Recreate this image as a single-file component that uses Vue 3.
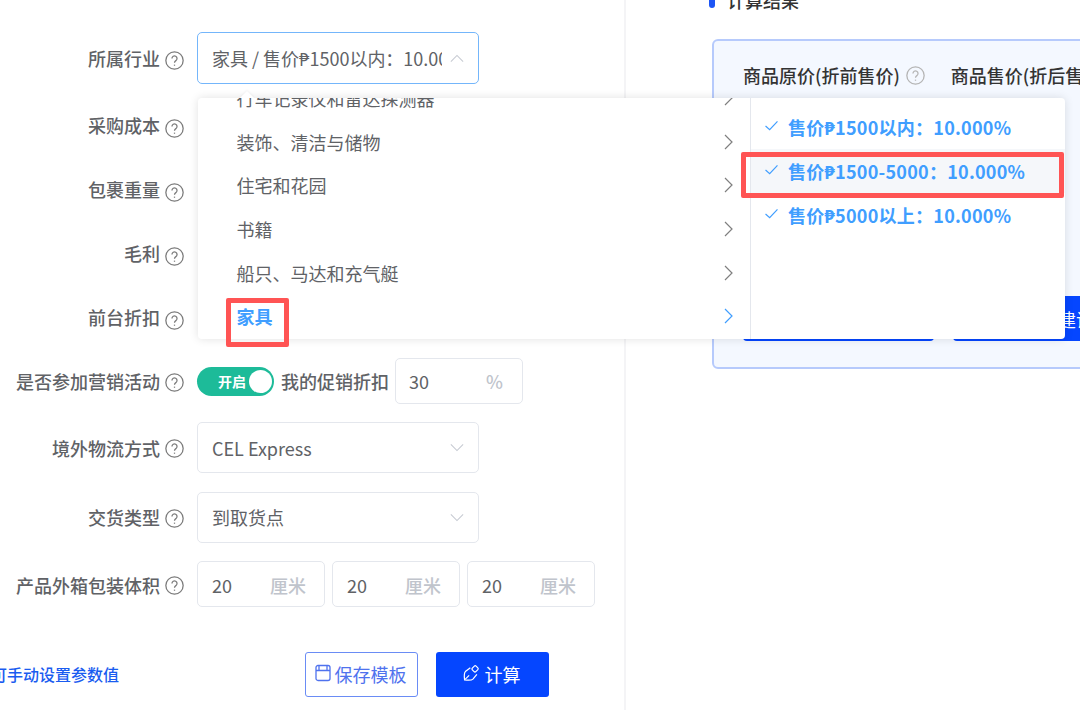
<script setup>
const rows = [
  { label: '采购成本', unit: '' },
  { label: '包裹重量', unit: '' },
  { label: '毛利', unit: '%' },
  { label: '前台折扣', unit: '%' }
]
const categories = ['行车记录仪和雷达探测器', '装饰、清洁与储物', '住宅和花园', '书籍', '船只、马达和充气艇', '家具']
const prices = ['售价₱1500以内：10.000%', '售价₱1500-5000：10.000%', '售价₱5000以上：10.000%']
</script>

<template>
  <div class="page">
    <section class="form">
      <div class="row first">
        <label class="label">所属行业</label>
        <svg class="help" viewBox="0 0 18 18"><circle cx="9" cy="9" r="8.2"/><path d="M6.6 7.1a2.4 2.4 0 1 1 3.7 2c-.9.6-1.3 1-1.3 2.1"/><path d="M9 12.9v1.1"/></svg>
        <div class="select focus">
          <span class="select-text">家具 / 售价₱1500以内：10.000%</span>
          <svg class="caret" viewBox="0 0 16 10"><path d="M1 8.5 8 1.5l7 7"/></svg>
        </div>
      </div>

      <div v-for="r in rows" :key="r.label" class="row plain">
        <label class="label">{{ r.label }}</label>
        <svg class="help" viewBox="0 0 18 18"><circle cx="9" cy="9" r="8.2"/><path d="M6.6 7.1a2.4 2.4 0 1 1 3.7 2c-.9.6-1.3 1-1.3 2.1"/><path d="M9 12.9v1.1"/></svg>
      </div>

      <div class="row promo">
        <label class="label">是否参加营销活动</label>
        <svg class="help" viewBox="0 0 18 18"><circle cx="9" cy="9" r="8.2"/><path d="M6.6 7.1a2.4 2.4 0 1 1 3.7 2c-.9.6-1.3 1-1.3 2.1"/><path d="M9 12.9v1.1"/></svg>
        <div class="switch"><span class="switch-text">开启</span><span class="knob"></span></div>
        <span class="promo-label">我的促销折扣</span>
        <div class="input"><span>30</span><span class="unit pct">%</span></div>
      </div>

      <div class="row tall shipping">
        <label class="label">境外物流方式</label>
        <svg class="help" viewBox="0 0 18 18"><circle cx="9" cy="9" r="8.2"/><path d="M6.6 7.1a2.4 2.4 0 1 1 3.7 2c-.9.6-1.3 1-1.3 2.1"/><path d="M9 12.9v1.1"/></svg>
        <div class="select">
          <span class="select-text">CEL Express</span>
          <svg class="caret" viewBox="0 0 16 10"><path d="M1 1.5l7 7 7-7"/></svg>
        </div>
      </div>

      <div class="row tall delivery">
        <label class="label">交货类型</label>
        <svg class="help" viewBox="0 0 18 18"><circle cx="9" cy="9" r="8.2"/><path d="M6.6 7.1a2.4 2.4 0 1 1 3.7 2c-.9.6-1.3 1-1.3 2.1"/><path d="M9 12.9v1.1"/></svg>
        <div class="select">
          <span class="select-text">到取货点</span>
          <svg class="caret" viewBox="0 0 16 10"><path d="M1 1.5l7 7 7-7"/></svg>
        </div>
      </div>

      <div class="row volume">
        <label class="label">产品外箱包装体积</label>
        <svg class="help" viewBox="0 0 18 18"><circle cx="9" cy="9" r="8.2"/><path d="M6.6 7.1a2.4 2.4 0 1 1 3.7 2c-.9.6-1.3 1-1.3 2.1"/><path d="M9 12.9v1.1"/></svg>
        <div class="dims">
          <div v-for="n in 3" :key="n" class="input"><span>20</span><span class="unit">厘米</span></div>
        </div>
      </div>

      <div class="actions">
        <span class="link"><span>可手动设置参数值</span></span>
        <button class="btn ghost">
          <svg class="btn-icon" viewBox="0 0 16 18"><rect x="1" y="1.5" width="14" height="15" rx="2"/><path d="M1 6.500h14M4 1.500v5M12 1.500v5"/></svg>
          保存模板
        </button>
        <button class="btn solid">
          <svg class="btn-icon nib" viewBox="0 0 18 18"><path d="M7.800 3.500 2.500 7.500c-1 1-1.300 5-.8 8.800 3.800.5 7.800.2 8.800-.8l4.200-5"/><path d="M2.200 15.800l4.300-4.300"/><rect x="10" y="2" width="5.600" height="5.200" rx="1.300" transform="rotate(-45 12.800 4.600)"/></svg>
          计算
        </button>
      </div>
    </section>

    <section class="result">
      <h3 class="result-title">计算结果</h3>
      <div class="card">
        <div class="card-head">
          <span class="col-a">商品原价(折前售价)</span>
          <svg class="help light" viewBox="0 0 18 18"><circle cx="9" cy="9" r="8.2"/><path d="M6.6 7.1a2.4 2.4 0 1 1 3.7 2c-.9.6-1.3 1-1.300 2.100"/><path d="M9 12.900v1.100"/></svg>
          <span class="col-b">商品售价(折后售价)</span>
        </div>
        <div class="card-actions">
          <div class="card-btn"></div>
          <div class="card-btn wide">建议售价</div>
        </div>
      </div>
    </section>

    <div class="popper">
      <span class="popper-arrow"></span>
      <ul class="menu cats">
        <li v-for="c in categories" :key="c" class="cat" :class="{ active: c === '家具' }">
          <span>{{ c }}</span>
          <svg class="chev" viewBox="0 0 9 16"><path d="M1 1l7 7-7 7"/></svg>
        </li>
      </ul>
      <ul class="menu prices">
        <li v-for="(p, i) in prices" :key="p" class="price" :class="{ hover: i === 1 }">
          <svg class="check" viewBox="0 0 16 12"><path d="M1.500 6.500 6 10.500 14.500 1.500"/></svg>
          <span>{{ p }}</span>
        </li>
      </ul>
    </div>

    <div class="mark mark-cat"></div>
    <div class="mark mark-price"></div>
  </div>
</template>

<style scoped>
.page {
  position: relative;
  width: 1080px;
  height: 710px;
  overflow: hidden;
  display: flex;
  background: #fff;
  font-family: "Noto Sans CJK SC", "Noto Sans", sans-serif;
  font-size: 18px;
  color: #606266;
}
.form {
  width: 626px;
  flex: none;
  box-sizing: border-box;
  padding-top: 32px;
  border-right: 2px solid #f4f4f6;
  display: flex;
  flex-direction: column;
  gap: 18px;
}
.row {
  height: 46px;
  display: flex;
  align-items: center;
}
.row.first { height: 54px; }
.row.first .label { margin-top: -2px; }
.row.plain .label { margin-top: -4px; }
.row.promo { margin-top: -2px; }
.row.tall { height: 51px; }
.row.shipping { margin-bottom: 1px; }
.row.delivery .label { margin-top: -1px; }
.row.delivery .select-text { margin-top: -2px; }
.row.volume .label { margin-top: 2px; }
.row.volume .input span { margin-top: 2px; }
.label {
  width: 160px;
  flex: none;
  text-align: right;
  font-weight: 500;
  line-height: 24px;
  white-space: nowrap;
}
.help {
  width: 19px;
  height: 19px;
  flex: none;
  margin: 2px 13px 0 5px;
  fill: none;
  stroke: #7a7a7a;
  stroke-width: 1.200;
}
.help.light { stroke: #b4b4b4; margin: 0; }
.select {
  width: 282px;
  height: 51px;
  box-sizing: border-box;
  border: 1px solid #e4e7ed;
  border-radius: 5px;
  display: flex;
  align-items: center;
  padding: 0 14px;
  gap: 8px;
}
.select.focus { border-color: #74b6fb; height: 52px; margin-top: -2px; }
.select-text {
  flex: 1;
  min-width: 0;
  overflow: hidden;
  white-space: nowrap;
}
.caret {
  width: 14px;
  height: 9px;
  flex: none;
  fill: none;
  stroke: #c6cad2;
  stroke-width: 1.200;
}
.switch {
  width: 77px;
  height: 29px;
  border-radius: 15px;
  background: #1dbb99;
  display: flex;
  align-items: center;
  justify-content: flex-end;
  padding-right: 1px;
  box-sizing: border-box;
  gap: 3px;
  flex: none;
}
.switch-text { color: #fff; font-size: 14px; font-weight: 700; }
.knob {
  width: 23px;
  height: 23px;
  border-radius: 50%;
  background: #fff;
  margin-right: 1px;
}
.promo-label {
  margin: 0 6px 0 7px;
  font-weight: 500;
  white-space: nowrap;
}
.input {
  width: 128px;
  height: 46px;
  box-sizing: border-box;
  border: 1px solid #e4e7ed;
  border-radius: 5px;
  padding: 0 18px 0 13px;
  display: flex;
  align-items: center;
  justify-content: space-between;
  flex: none;
}
.unit { color: #c0c4cc; font-weight: 500; }
.unit.pct { margin-right: 1px; }
.dims { display: flex; gap: 7px; }
.dims .input { padding: 0 18px 0 14px; }
.actions {
  margin-top: 26px;
  display: flex;
  align-items: center;
  height: 46px;
}
.link {
  width: 119px;
  flex: none;
  display: flex;
  justify-content: flex-end;
  overflow: hidden;
  white-space: nowrap;
  font-size: 16px;
  font-weight: 500;
  color: #1a5cf0;
}
.btn {
  width: 113px;
  height: 45px;
  box-sizing: border-box;
  border-radius: 3px;
  font: inherit;
  display: flex;
  align-items: center;
  justify-content: center;
  gap: 4px;
  padding: 0 2px 0 0;
  flex: none;
}
.ghost {
  margin-left: 186px;
  background: #fff;
  border: 1px solid #6a8cf5;
  color: #4f72ee;
}
.solid {
  margin-left: 18px;
  background: #0546ff;
  border: 0;
  color: #fff;
  gap: 5px;
}
.btn-icon {
  width: 16px;
  height: 18px;
  fill: none;
  stroke: currentColor;
  stroke-width: 1.300;
  margin-top: -3px;
}
.btn-icon.nib { width: 17px; height: 18px; }
.result {
  flex: 1;
  min-width: 0;
  padding-left: 83px;
}
.result-title {
  margin: -12px 0 0;
  height: 24px;
  line-height: 24px;
  font-size: 18px;
  font-weight: 500;
  color: #333;
  white-space: nowrap;
  padding-left: 18px;
  position: relative;
}
.result-title::before {
  content: "";
  position: absolute;
  left: 0;
  top: 0;
  width: 6px;
  height: 20px;
  border-radius: 3px;
  background: #1d55f5;
}
.card {
  margin-top: 27px;
  margin-left: 3px;
  width: 520px;
  height: 330px;
  box-sizing: border-box;
  background: #f4f8ff;
  border: 2px solid #b6cafc;
  border-radius: 6px;
  padding: 20px 29px 0;
  display: flex;
  flex-direction: column;
}
.card-head {
  display: flex;
  align-items: center;
  height: 28px;
  color: #333;
  font-size: 18px;
  font-weight: 500;
  white-space: nowrap;
}
.card-head .col-a { margin-right: 6px; }
.card-head .col-b { margin-left: 26px; }
.card-actions {
  display: flex;
  gap: 19px;
  margin-top: 207px;
}
.card-btn {
  width: 191px;
  height: 45px;
  border-radius: 4px;
  background: #0546ff;
  color: #fff;
  flex: none;
  display: flex;
  align-items: center;
  justify-content: center;
}
.card-btn.wide { width: 282px; }
.popper {
  position: absolute;
  left: 198px;
  top: 98px;
  width: 867px;
  height: 241px;
  display: flex;
  background: #fff;
  border-radius: 4px;
  box-shadow: 0 0 10px rgba(0, 0, 0, 0.12);
}
.popper-arrow {
  position: absolute;
  left: 44px;
  top: -5px;
  width: 10px;
  height: 10px;
  background: #fff;
  transform: rotate(45deg);
  box-shadow: -1px -1px 2px rgba(0, 0, 0, 0.04);
}
.menu {
  margin: 0;
  padding: 0;
  list-style: none;
  overflow: hidden;
  position: relative;
  display: flex;
  flex-direction: column;
}
.cats {
  width: 552px;
  border-right: 1px solid #e4e7ed;
  justify-content: flex-end;
  flex: none;
  padding-bottom: 1px;
}
.cat {
  flex: none;
  height: 43.600px;
  padding: 0 17px 0 38.500px;
  display: flex;
  align-items: center;
  justify-content: space-between;
  white-space: nowrap;
}
.chev {
  width: 9px;
  height: 16px;
  fill: none;
  stroke: #7f7f7f;
  stroke-width: 1.200;
}
.cat.active { color: #409eff; font-weight: 700; }
.cat.active .chev { stroke: #409eff; }
.prices {
  flex: 1;
  min-width: 0;
  padding-top: 7px;
}
.price {
  flex: none;
  height: 44px;
  padding-left: 13px;
  display: flex;
  align-items: center;
  gap: 9px;
  color: #409eff;
  font-weight: 700;
  letter-spacing: 0.25px;
  white-space: nowrap;
}
.price.hover { background: #f5f7fa; }
.check {
  width: 15px;
  height: 11px;
  fill: none;
  stroke: #409eff;
  stroke-width: 1.300;
  margin-top: -4px;
}
.mark {
  position: absolute;
  box-sizing: border-box;
  border: 5px solid #ff5454;
  border-radius: 2px;
}
.mark-cat { left: 226px; top: 298px; width: 63px; height: 49px; }
.mark-price { left: 741px; top: 152px; width: 323px; height: 46px; }
</style>
